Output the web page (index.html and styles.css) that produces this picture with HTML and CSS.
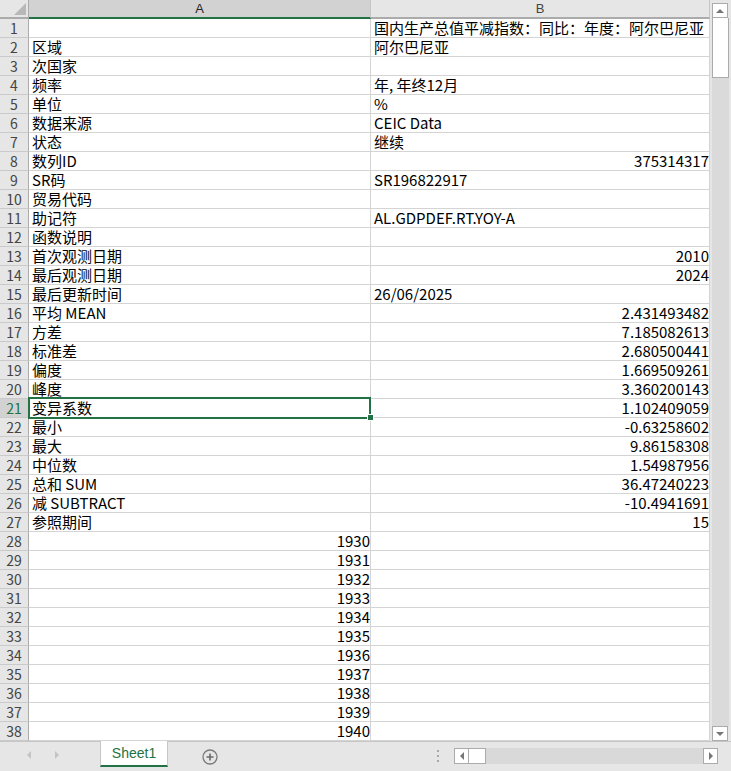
FILE: index.html
```html
<!DOCTYPE html>
<html lang="zh-CN">
<head>
  <meta charset="UTF-8">
  <title>Sheet1</title>
  <link rel="stylesheet" href="styles.css">
</head>
<body>
  <div class="book">
    <div class="main">
      <div class="grid">
        <div class="corner"><span class="tri"></span></div>
        <div class="colhead active">A</div>
        <div class="colhead">B</div>

        <div class="rowhead">1</div><div class="cell"></div><div class="cell">国内生产总值平减指数：同比：年度：阿尔巴尼亚</div>
        <div class="rowhead">2</div><div class="cell">区域</div><div class="cell">阿尔巴尼亚</div>
        <div class="rowhead">3</div><div class="cell">次国家</div><div class="cell"></div>
        <div class="rowhead">4</div><div class="cell">频率</div><div class="cell">年, 年终12月</div>
        <div class="rowhead">5</div><div class="cell">单位</div><div class="cell">%</div>
        <div class="rowhead">6</div><div class="cell">数据来源</div><div class="cell">CEIC Data</div>
        <div class="rowhead">7</div><div class="cell">状态</div><div class="cell">继续</div>
        <div class="rowhead">8</div><div class="cell">数列ID</div><div class="cell num">375314317</div>
        <div class="rowhead">9</div><div class="cell">SR码</div><div class="cell">SR196822917</div>
        <div class="rowhead">10</div><div class="cell">贸易代码</div><div class="cell"></div>
        <div class="rowhead">11</div><div class="cell">助记符</div><div class="cell">AL.GDPDEF.RT.YOY-A</div>
        <div class="rowhead">12</div><div class="cell">函数说明</div><div class="cell"></div>
        <div class="rowhead">13</div><div class="cell">首次观测日期</div><div class="cell num">2010</div>
        <div class="rowhead">14</div><div class="cell">最后观测日期</div><div class="cell num">2024</div>
        <div class="rowhead">15</div><div class="cell">最后更新时间</div><div class="cell">26/06/2025</div>
        <div class="rowhead">16</div><div class="cell">平均 MEAN</div><div class="cell num">2.431493482</div>
        <div class="rowhead">17</div><div class="cell">方差</div><div class="cell num">7.185082613</div>
        <div class="rowhead">18</div><div class="cell">标准差</div><div class="cell num">2.680500441</div>
        <div class="rowhead">19</div><div class="cell">偏度</div><div class="cell num">1.669509261</div>
        <div class="rowhead">20</div><div class="cell">峰度</div><div class="cell num">3.360200143</div>
        <div class="rowhead active">21</div><div class="cell sel">变异系数</div><div class="cell num">1.102409059</div>
        <div class="rowhead">22</div><div class="cell">最小</div><div class="cell num">-0.63258602</div>
        <div class="rowhead">23</div><div class="cell">最大</div><div class="cell num">9.86158308</div>
        <div class="rowhead">24</div><div class="cell">中位数</div><div class="cell num">1.54987956</div>
        <div class="rowhead">25</div><div class="cell">总和 SUM</div><div class="cell num">36.47240223</div>
        <div class="rowhead">26</div><div class="cell">减 SUBTRACT</div><div class="cell num">-10.4941691</div>
        <div class="rowhead">27</div><div class="cell">参照期间</div><div class="cell num">15</div>
        <div class="rowhead">28</div><div class="cell num">1930</div><div class="cell"></div>
        <div class="rowhead">29</div><div class="cell num">1931</div><div class="cell"></div>
        <div class="rowhead">30</div><div class="cell num">1932</div><div class="cell"></div>
        <div class="rowhead">31</div><div class="cell num">1933</div><div class="cell"></div>
        <div class="rowhead">32</div><div class="cell num">1934</div><div class="cell"></div>
        <div class="rowhead">33</div><div class="cell num">1935</div><div class="cell"></div>
        <div class="rowhead">34</div><div class="cell num">1936</div><div class="cell"></div>
        <div class="rowhead">35</div><div class="cell num">1937</div><div class="cell"></div>
        <div class="rowhead">36</div><div class="cell num">1938</div><div class="cell"></div>
        <div class="rowhead">37</div><div class="cell num">1939</div><div class="cell"></div>
        <div class="rowhead">38</div><div class="cell num">1940</div><div class="cell"></div>
      </div>

      <div class="vscroll">
        <div class="sbtn"><span class="arrow up"></span></div>
        <div class="vtrack"><div class="vthumb"></div></div>
        <div class="sbtn"><span class="arrow down"></span></div>
      </div>
    </div>

    <div class="tabbar">
      <div class="nav">
        <span class="arrow left faint"></span>
        <span class="arrow right faint"></span>
      </div>
      <div class="tab">Sheet1</div>
      <div class="addsheet">
        <svg width="16" height="16" viewBox="0 0 16 16">
          <circle cx="8" cy="8" r="7" fill="none" stroke="#7a7a7a" stroke-width="1.3"/>
          <path d="M8 4.5v7M4.5 8h7" stroke="#6a6a6a" stroke-width="1.6"/>
        </svg>
      </div>
      <div class="grip"><i></i><i></i><i></i></div>
      <div class="hscroll">
        <div class="sbtn"><span class="arrow left"></span></div>
        <div class="hthumb"></div>
        <div class="htrack"></div>
        <div class="sbtn"><span class="arrow right"></span></div>
      </div>
    </div>
  </div>
</body>
</html>
```

FILE: styles.css
```css
body {
  margin: 0;
  background: #fff;
  font-family: "Noto Sans CJK SC", "Liberation Sans", sans-serif;
  color: #000;
  overflow: hidden;
}
.book {
  width: 731px;
  height: 771px;
  display: flex;
  flex-direction: column;
}
.main {
  display: flex;
  height: 741px;
}
.grid {
  display: grid;
  grid-template-columns: 29px 342px 339px;
  grid-auto-rows: 19px;
  width: 710px;
}
.grid > div {
  box-sizing: border-box;
  white-space: nowrap;
}
.corner {
  background: #e6e6e6;
  border-right: 1px solid #ababab;
  border-bottom: 2px solid #ababab;
  position: relative;
}
.corner .tri {
  position: absolute;
  right: 2px;
  bottom: 2px;
  width: 0;
  height: 0;
  border-left: 12px solid transparent;
  border-bottom: 12px solid #b8b8b8;
}
.colhead {
  background: #e6e6e6;
  border-right: 1px solid #c6c6c6;
  border-bottom: 2px solid #ababab;
  text-align: center;
  font-family: "Liberation Sans", sans-serif;
  font-size: 13px;
  line-height: 17px;
  color: #444;
}
.colhead.active {
  background: #d2d2d2;
  border-bottom-color: #217346;
  color: #262626;
}
.rowhead {
  background: #e6e6e6;
  border-right: 1px solid #ababab;
  border-bottom: 1px solid #cacaca;
  text-align: center;
  font-size: 14px;
  line-height: 18px;
  color: #444;
}
.rowhead.active {
  background: #d2d2d2;
  color: #217346;
}
.cell {
  border-right: 1px solid #d4d4d4;
  border-bottom: 1px solid #d4d4d4;
  padding: 0 3px;
  font-size: 15px;
  line-height: 18px;
}
.cell.num {
  text-align: right;
  padding: 0 0 0 3px;
}
.cell.sel {
  position: relative;
  z-index: 2;
}
.cell.sel::after {
  content: "";
  position: absolute;
  top: -2px;
  left: -1px;
  right: -1px;
  bottom: -2px;
  border: 2px solid #217346;
}
.cell.sel::before {
  content: "";
  position: absolute;
  right: -4px;
  bottom: -4px;
  width: 5px;
  height: 5px;
  background: #217346;
  border: 1px solid #fff;
  z-index: 3;
}

/* scrollbars */
.vscroll {
  width: 21px;
  background: #e6e6e6;
  display: flex;
  flex-direction: column;
  padding: 3px 2px 0 2px;
  box-sizing: border-box;
}
.sbtn {
  box-sizing: border-box;
  width: 16px;
  height: 15px;
  background: #fff;
  border: 1px solid #ababab;
  display: flex;
  align-items: center;
  justify-content: center;
  flex-shrink: 0;
}
.vtrack {
  flex: 1;
  background: #dadada;
}
.vthumb {
  box-sizing: border-box;
  height: 60px;
  background: #fff;
  border: 1px solid #ababab;
  border-top: 0;
}
.arrow {
  width: 0;
  height: 0;
  display: block;
}
.arrow.up {
  border-left: 4px solid transparent;
  border-right: 4px solid transparent;
  border-bottom: 4px solid #777;
}
.arrow.down {
  border-left: 4px solid transparent;
  border-right: 4px solid transparent;
  border-top: 4px solid #777;
}
.arrow.left {
  border-top: 4px solid transparent;
  border-bottom: 4px solid transparent;
  border-right: 4px solid #777;
}
.arrow.right {
  border-top: 4px solid transparent;
  border-bottom: 4px solid transparent;
  border-left: 4px solid #777;
}
.arrow.faint.left { border-right-color: #c4c4c4; }
.arrow.faint.right { border-left-color: #c4c4c4; }

/* sheet tabs */
.tabbar {
  height: 30px;
  background: #e6e6e6;
  border-top: 1px solid #c6c6c6;
  box-sizing: border-box;
  display: flex;
  align-items: flex-start;
  font-family: "Liberation Sans", "Noto Sans CJK SC", sans-serif;
}
.nav {
  width: 100px;
  height: 26px;
  display: flex;
  align-items: center;
  padding-left: 27px;
  gap: 24px;
  box-sizing: border-box;
}
.tab {
  box-sizing: border-box;
  width: 68px;
  height: 26px;
  margin-top: -1px;
  background: #fff;
  border-left: 1px solid #c6c6c6;
  border-right: 1px solid #c6c6c6;
  border-bottom: 2px solid #217346;
  color: #217346;
  font-size: 14px;
  line-height: 24px;
  text-align: center;
}
.addsheet {
  margin: 7px 0 0 34px;
  height: 16px;
}
.grip {
  margin: 8px 0 0 219px;
  display: flex;
  flex-direction: column;
  gap: 3px;
}
.grip i {
  display: block;
  width: 2px;
  height: 2px;
  background: #a6a6a6;
}
.hscroll {
  margin: 5px 0 0 15px;
  width: 264px;
  height: 17px;
  display: flex;
  align-items: center;
}
.hscroll .sbtn {
  width: 15px;
  height: 16px;
}
.hthumb {
  box-sizing: border-box;
  width: 17px;
  height: 16px;
  background: #fff;
  border: 1px solid #ababab;
  border-left: 0;
}
.htrack {
  flex: 1;
  height: 16px;
  background: #d9d9d9;
}
```
